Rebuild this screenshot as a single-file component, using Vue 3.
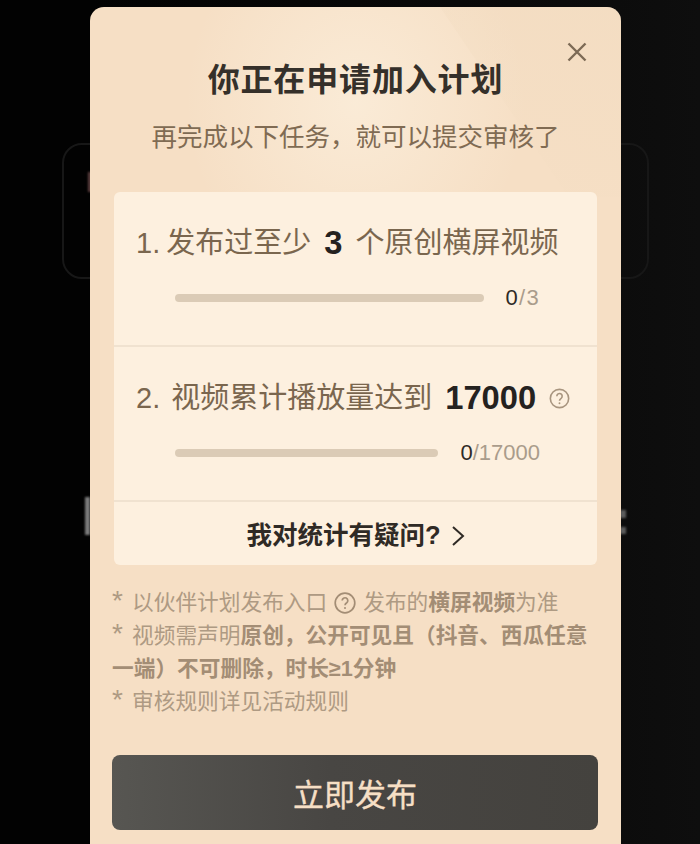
<script setup>
const tasks = [
  { id: 1, lead: '1.', before: '发布过至少', value: '3', after: '个原创横屏视频', done: '0', total: '/3', help: false },
  { id: 2, lead: '2.', before: '视频累计播放量达到', value: '17000', after: '', done: '0', total: '/17000', help: true },
]
</script>

<template>
  <div class="page">
    <div class="backdrop-card"></div>
    <div class="backdrop-mark backdrop-left"></div>
    <div class="backdrop-mark backdrop-pink"></div>
    <div class="backdrop-mark backdrop-right"></div>
    <div class="backdrop-mark backdrop-right lower"></div>
    <section class="modal">
      <div class="sheen"></div>
      <div class="facet"></div>
      <button class="close" aria-label="关闭">
        <svg viewBox="0 0 20 20" width="20" height="20"><path d="M1.5 1.5 18.5 18.5M18.5 1.5 1.5 18.5" /></svg>
      </button>
      <h1 class="title">你正在申请加入计划</h1>
      <p class="subtitle">再完成以下任务，就可以提交审核了</p>

      <div class="panel">
        <div v-for="task in tasks" :key="task.id" class="task" :class="'task-' + task.id">
          <div class="task-title">
            <span class="lead">{{ task.lead }}</span>
            <span>{{ task.before }}</span>
            <strong class="value">{{ task.value }}</strong>
            <span v-if="task.after">{{ task.after }}</span>
            <svg v-if="task.help" class="help" viewBox="0 0 22 22" width="21" height="21">
              <circle cx="11" cy="11" r="9.6" />
              <path d="M8.2 8.6a2.8 2.8 0 1 1 4.5 2.2c-1 .7-1.7 1.2-1.7 2.5" />
              <circle class="dot" cx="11" cy="16" r="1" />
            </svg>
          </div>
          <div class="progress">
            <div class="track"></div>
            <div class="count"><span class="done">{{ task.done }}</span>{{ task.total }}</div>
          </div>
        </div>
        <div class="question">
          <span>我对统计有疑问?</span>
          <svg viewBox="0 0 14 22" width="14" height="22"><path d="M2 2 12 11 2 20" /></svg>
        </div>
      </div>

      <div class="notes">
        <p><span class="star">*</span>以伙伴计划发布入口
          <svg class="help note-help" viewBox="0 0 22 22" width="22" height="22">
            <circle cx="11" cy="11" r="9.8" />
            <path d="M8.2 8.6a2.8 2.8 0 1 1 4.5 2.2c-1 .7-1.7 1.2-1.7 2.5" />
            <circle class="dot" cx="11" cy="16" r="1" />
          </svg>
          发布的<b>横屏视频</b>为准</p>
        <p><span class="star">*</span>视频需声明<b>原创，公开可见且（抖音、西瓜任意</b><br><b>一端）不可删除，时长≥1分钟</b></p>
        <p><span class="star">*</span>审核规则详见活动规则</p>
      </div>

      <button class="publish">立即发布</button>
    </section>
  </div>
</template>

<style>
html, body { margin: 0; background: #050505; }
</style>

<style scoped>
.page {
  position: relative;
  width: 700px;
  height: 844px;
  overflow: hidden;
  box-sizing: border-box;
  padding: 7px 0 0 90px;
  display: flex;
  background: linear-gradient(90deg, #020202 0 13%, #0c0c0c 88%, #0e0e0e);
  font-family: "Liberation Sans", "Noto Sans CJK SC", sans-serif;
}
.backdrop-card {
  position: absolute;
  left: 62px;
  top: 143px;
  width: 587px;
  height: 136px;
  box-sizing: border-box;
  border: 2px solid #171717;
  border-radius: 20px;
}
.backdrop-mark {
  position: absolute;
  background: #7b7b7b;
  filter: blur(1px);
}
.backdrop-left { left: 85px; top: 497px; width: 5px; height: 38px; }
.backdrop-pink { left: 88px; top: 172px; width: 3px; height: 20px; background: #5e4040; }
.backdrop-right { left: 620px; top: 510px; width: 6px; height: 8px; background: #5c5c5c; }
.backdrop-right.lower { top: 527px; height: 7px; }
.modal {
  position: relative;
  flex: none;
  width: 531px;
  height: 860px;
  box-sizing: border-box;
  padding: 0 24px;
  border-radius: 14px 14px 0 0;
  background: #f6dfc5;
  overflow: hidden;
}
.sheen {
  position: absolute;
  inset: 0 0 auto 0;
  height: 190px;
  background: radial-gradient(ellipse 170px 190px at 50% 50%, rgba(252, 240, 222, .7), rgba(252, 240, 222, 0));
  pointer-events: none;
}
.facet {
  position: absolute;
  top: 0;
  right: 0;
  width: 181px;
  height: 190px;
  clip-path: polygon(0 0, 100% 0, 100% 100%, 71% 100%);
  background: linear-gradient(200deg, rgba(240, 218, 190, .4), rgba(242, 222, 196, .05));
  pointer-events: none;
}
.close {
  position: absolute;
  top: 35px;
  right: 34px;
  padding: 0;
  border: 0;
  background: none;
  line-height: 0;
}
.close path {
  fill: none;
  stroke: #7c6a55;
  stroke-width: 2.4;
}
.title {
  position: relative;
  margin: 0;
  padding-top: 53px;
  font-size: 32px;
  line-height: 40px;
  letter-spacing: .85px;
  font-weight: 700;
  text-align: center;
  color: #35302a;
}
.subtitle {
  position: relative;
  margin: 18px 0 0;
  font-size: 25.5px;
  line-height: 38px;
  text-align: center;
  color: #806b53;
}
.panel {
  position: relative;
  margin-top: 36px;
  height: 373px;
  box-sizing: border-box;
  display: flex;
  flex-direction: column;
  border-radius: 6px;
  background: #fdf0df;
}
.task {
  box-sizing: border-box;
  height: 155px;
  border-bottom: 2px solid #f0e2d0;
  padding-top: 30px;
}
.task-title {
  display: flex;
  align-items: center;
  height: 42px;
  padding-left: 22px;
  font-size: 29px;
  line-height: 42px;
  white-space: nowrap;
  color: #7a664e;
}
.lead { margin-right: 6px; }
.value {
  margin: 0 13px;
  font-size: 32.7px;
  color: #25221f;
}
.task-2 .lead { margin-right: 11px; }
.help circle, .help path {
  fill: none;
  stroke: #a8957f;
  stroke-width: 1.7;
}
.help .dot { fill: #a8957f; stroke: none; }
.progress {
  display: flex;
  align-items: center;
  margin-top: 19px;
  padding: 0 57px 0 61px;
}
.track {
  flex: 1;
  height: 8px;
  border-radius: 4px;
  background: #dbcbb6;
}
.count {
  margin-left: 22px;
  font-size: 22px;
  line-height: 30px;
  color: #aa9c8b;
}
.task-1 .count { letter-spacing: 1.3px; }
.done { color: #2e2a26; }
.question {
  flex: 1;
  display: flex;
  align-items: center;
  justify-content: center;
  gap: 10px;
  padding-bottom: 2px;
  font-size: 25.5px;
  font-weight: 700;
  color: #2f2a25;
}
.question svg { margin-top: 7px; }
.question path {
  fill: none;
  stroke: #2f2a25;
  stroke-width: 2;
}
.notes {
  position: relative;
  margin: 21px 0 0 -2px;
  font-size: 21.7px;
  line-height: 33px;
  color: #ae9a83;
}
.notes p { margin: 0; }
.notes b { font-weight: 700; color: #a38d75; }
.star {
  display: inline-block;
  width: 20px;
  font-size: 28px;
  line-height: 20px;
}
.note-help {
  vertical-align: -4px;
  margin: 0 1px;
}
.note-help circle, .note-help path { stroke: #a38d75; }
.note-help .dot { fill: #a38d75; }
.publish {
  display: block;
  width: 486px;
  height: 75px;
  margin: 37px 0 0 -2px;
  padding: 0;
  border: 0;
  border-radius: 8px;
  background: linear-gradient(90deg, #575652, #484643 45%, #44423e);
  font-family: inherit;
  font-size: 31px;
  -webkit-text-stroke: .4px #f6dfc5;
  color: #f6dfc5;
}
</style>
